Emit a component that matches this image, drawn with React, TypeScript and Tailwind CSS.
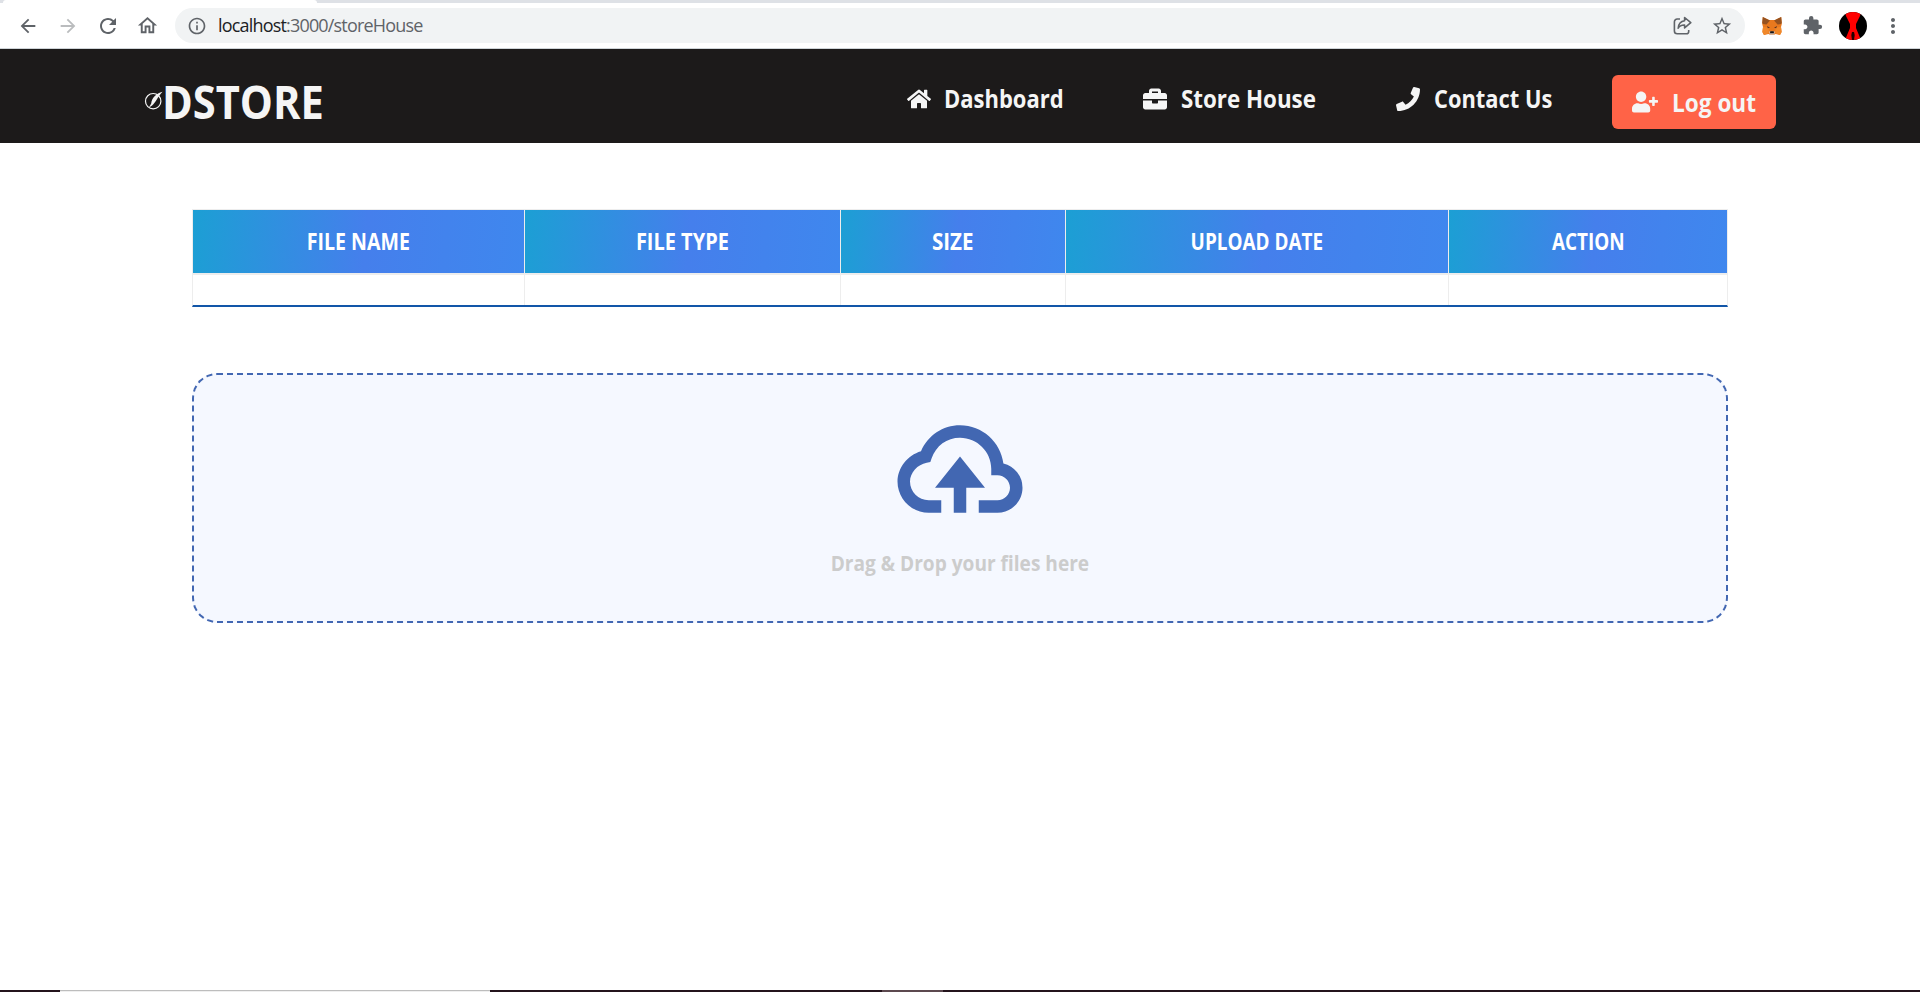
import React from "react";
import { FaBriefcase, FaHome, FaPhone, FaUserPlus } from "react-icons/fa";
import { BiCloudUpload } from "react-icons/bi";
import {
  MdArrowBack,
  MdArrowForward,
  MdExtension,
  MdInfoOutline,
  MdMoreVert,
  MdOutlineHome,
  MdRefresh,
  MdStarOutline,
} from "react-icons/md";

function ShareIcon() {
  return (
    <svg className="size-[20px]" viewBox="0 0 20 20" fill="none" stroke="currentColor" strokeWidth="1.6" strokeLinejoin="round">
      <path d="M8 3H5.200A2.800 2.800 0 0 0 2.400 5.800v9.200A2.800 2.800 0 0 0 5.200 17.800h9.200a2.300 2.300 0 0 0 2.300-2.300V14" />
      <path d="M12.600 1.500l6.200 5.200-6.200 5.200V9c-3.300-.1-5.200 1-6.400 3.200.3-4 2.600-6.900 6.400-7.400z" />
    </svg>
  );
}

function FoxIcon() {
  return (
    <svg className="size-[20px]" viewBox="0 0 20 20">
      <path d="M.8 1L7 4h6l6.200-3 .6 7-.8 3 .6 5-1.600 3-4.500-1-1.500.8H8L6.500 18 2 19 .4 16 1 11 .2 8z" fill="#e8791e" />
      <path d="M.8 1L8 4.500 4.500 8.500 1 8 .2 7zM19.200 1L12 4.500l3.500 4L19 8l.8-1z" fill="#96521f" />
      <path d="M1 11l5.500.5L7 17l-5 2-1.600-3zM19 11l-5.500.5L13 17l5 2 1.600-3z" fill="#f0882a" />
      <path d="M5 10l3 1.800-2.200.4zM15 10l-3 1.800 2.200.4z" fill="#5a3326" />
      <path d="M7 15.500h6l-1 3.300H8z" fill="#d5bfb2" />
      <path d="M8.300 15.300h3.400l.3 1.900H8z" fill="#161616" />
    </svg>
  );
}

function Avatar() {
  return (
    <svg className="size-[28px]" viewBox="0 0 28 28">
      <clipPath id="avatar">
        <circle cx="14" cy="14" r="14" />
      </clipPath>
      <g clipPath="url(#avatar)">
        <path d="M0 0h28v28H0z" fill="#000" />
        <path d="M6 0h16l-1 4-4 8v4l5 12H6l5-12v-4L7 4z" fill="#ff0000" />
        <path d="M13 20h2l.7 3-.7 5h-2l-.7-5z" fill="#200" />
      </g>
    </svg>
  );
}

function QuillMark() {
  return (
    <svg className="h-[20px] w-[19px]" viewBox="0 0 19 20" fill="none">
      <circle cx="9.200" cy="10.200" r="7.700" stroke="#f5f5f5" strokeWidth="1.200" />
      <path d="M18.500 .8C12 2.500 7.800 7 7.200 12.500L4.800 16.800l3.300-2.300C11.800 11.500 13.500 6 18.500 .8z" fill="#f5f5f5" />
    </svg>
  );
}

function BrowserBar() {
  return (
    <div className="shrink-0">
      <div className="flex h-[3px] bg-[#dee1e6]">
        <div className="ml-[3px] w-[314px] rounded-t-[3px] bg-white" />
      </div>
      <div className="flex h-[46px] items-center border-b border-[#cfd4d8] bg-white pl-[17px] pr-[15px] text-[#5f6368]">
        <MdArrowBack className="size-[22px]" />
        <MdArrowForward className="ml-[18px] size-[22px] text-[#babcbe]" />
        <MdRefresh className="ml-[17px] size-[24px]" />
        <MdOutlineHome className="ml-[16px] size-[23px]" />
        <div className="ml-[16px] flex h-[35px] w-[1570px] shrink-0 items-center rounded-full bg-[#f1f3f4] pl-[12px] pr-[12px]">
          <MdInfoOutline className="size-[20px]" />
          <span className="ml-[11px] text-[18px] tracking-[-0.82px]">
            <span className="text-[#202124]">localhost</span>:3000/storeHouse
          </span>
          <span className="ml-auto flex items-center gap-[19px]">
            <ShareIcon />
            <MdStarOutline className="size-[22px]" />
          </span>
        </div>
        <div className="ml-[17px] flex shrink-0 items-center">
          <FoxIcon />
          <MdExtension className="ml-[20px] size-[21px]" />
          <span className="ml-[16px]">
            <Avatar />
          </span>
          <MdMoreVert className="ml-[14px] size-[24px]" />
        </div>
      </div>
    </div>
  );
}

function Header() {
  return (
    <header className="flex h-[94px] shrink-0 items-start bg-[#1c1a1a] pl-[144px] text-[#f5f5f5]">
      <div className="flex w-[763px] items-center pt-[21px]">
        <QuillMark />
        <span className="-ml-px origin-left scale-x-[0.905] text-[46px] font-bold leading-[62px]">DSTORE</span>
      </div>
      <nav className="flex pt-[33px] text-[24.700px] font-bold leading-[34px]">
        <a className="flex w-[236px] items-center gap-[13px]">
          <FaHome className="size-[24px] shrink-0" />
          <span className="origin-left scale-x-[0.89]">Dashboard</span>
        </a>
        <a className="flex w-[253px] items-center gap-[14px]">
          <FaBriefcase className="size-[24px] shrink-0" />
          <span className="origin-left scale-x-[0.905] whitespace-nowrap">Store House</span>
        </a>
        <a className="flex w-[216px] items-center gap-[14px]">
          <FaPhone className="size-[24px] shrink-0" />
          <span className="origin-left scale-x-[0.885] whitespace-nowrap">Contact Us</span>
        </a>
      </nav>
      <button className="mt-[26px] flex h-[54px] w-[164px] items-center rounded-[6px] bg-[#ff6347] pl-[20px] pt-[2px] text-[24.700px] font-bold leading-[34px]">
        <FaUserPlus className="mb-[3px] mr-[14px] size-[26px] shrink-0" />
        <span className="origin-left scale-x-[0.915] whitespace-nowrap">Log out</span>
      </button>
    </header>
  );
}

const columns = [
  { name: "FILE NAME", fit: "scale-x-[0.87]" },
  { name: "FILE TYPE", fit: "scale-x-[0.887]" },
  { name: "SIZE", fit: "scale-x-[0.915]" },
  { name: "UPLOAD DATE", fit: "scale-x-[0.84]" },
  { name: "ACTION", fit: "scale-x-[0.84]" },
];
const grid = "grid grid-cols-[332px_316px_225px_383px_278px]";

function FileTable() {
  return (
    <div className="mt-[66px] border-x border-b-2 border-t border-x-[#ededed] border-b-[#1256a8] border-t-[#ededed]">
      <div className={`${grid} h-[65px] border-b-2 border-[#ededed]`}>
        {columns.map(({ name, fit }) => (
          <div
            key={name}
            className="flex items-center justify-center border-r border-[#ededed] bg-[linear-gradient(95deg,#1c9fd4_0%,#457fec_52%,#3f87ee_100%)] text-[22.500px] font-bold text-white last:border-r-0"
          >
            <span className={`whitespace-nowrap ${fit}`}>{name}</span>
          </div>
        ))}
      </div>
      <div className={`${grid} h-[30px]`}>
        {columns.map(({ name }) => (
          <div key={name} className="border-r border-[#ededed] last:border-r-0" />
        ))}
      </div>
    </div>
  );
}

export default function App() {
  return (
    <div className="flex h-[992px] flex-col overflow-hidden bg-white font-['Open_Sans',sans-serif]">
      <BrowserBar />
      <Header />
      <main className="mx-[192px] flex-1">
        <FileTable />
        <section className="mt-[66px] flex h-[250px] flex-col items-center rounded-[25px] border-2 border-dashed border-[#4267b2] bg-[#f5f8ff] pt-[19px]">
          <BiCloudUpload className="size-[150px] text-[#4267b2]" />
          <p className="mt-[3px] scale-x-[0.868] text-[22px] font-bold leading-[30px] text-[#cccccc]">
            Drag &amp; Drop your files here
          </p>
        </section>
      </main>
      <footer className="flex h-[2px] shrink-0 bg-[#24141c]">
        <div className="ml-[60px] w-[430px] border-t border-[#bdbdbd] bg-[#efefef]" />
        <div className="ml-[392px] w-[61px] bg-[#5c494f]" />
      </footer>
    </div>
  );
}
